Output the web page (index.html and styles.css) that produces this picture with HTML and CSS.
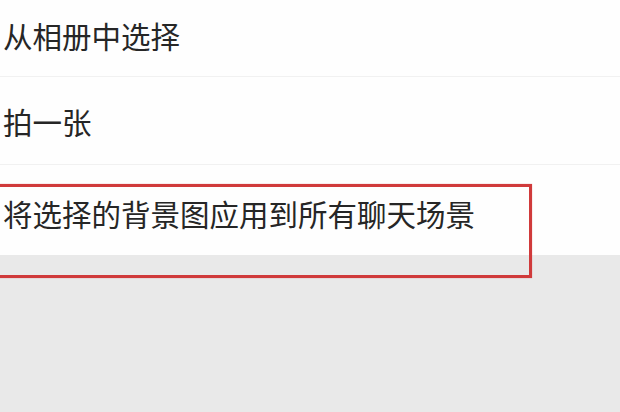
FILE: index.html
```html
<!DOCTYPE html>
<html lang="zh">
<head>
<meta charset="utf-8">
<link rel="stylesheet" href="styles.css">
</head>
<body>
<div class="menu">
  <div class="item item-first">从相册中选择</div>
  <div class="item item-second">拍一张</div>
  <div class="item item-third">将选择的背景图应用到所有聊天场景</div>
</div>
<div class="highlight"></div>
</body>
</html>
```
FILE: styles.css
```css
html, body {
  margin: 0;
  padding: 0;
}
body {
  width: 620px;
  height: 412px;
  background: #e9e9e9;
  position: relative;
  overflow: hidden;
  font-family: "Noto Sans CJK SC", "Noto Sans", sans-serif;
  color: #262626;
}
.menu {
  background: #fefefe;
  display: flex;
  flex-direction: column;
}
.item {
  box-sizing: border-box;
  padding-left: 3px;
  font-size: 29.5px;
  line-height: 29px;
  border-bottom: 1px solid #f1f1f1;
}
.item-first {
  height: 77px;
  padding-top: 21px;
}
.item-second {
  height: 88px;
  padding-top: 30px;
}
.item-third {
  height: 90px;
  padding-top: 34px;
  border-bottom: none;
}
.highlight {
  position: absolute;
  left: -4px;
  top: 184px;
  width: 530px;
  height: 88px;
  border: 3px solid #d03a3b;
  box-shadow: 0 0 1px rgba(208, 58, 59, 0.5);
}
```
